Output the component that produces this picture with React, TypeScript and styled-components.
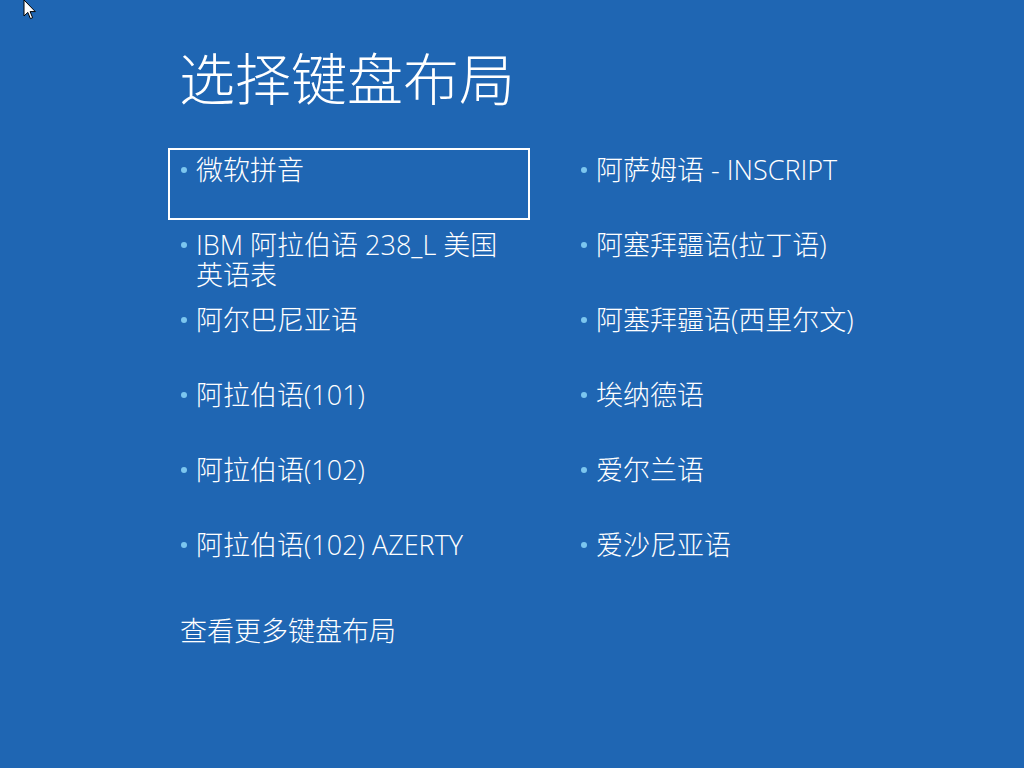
import React from "react";
import styled, { createGlobalStyle } from "styled-components";

const Global = createGlobalStyle`
  html, body {
    margin: 0;
    padding: 0;
    background: #1f66b3;
    overflow: hidden;
  }
  body {
    font-family: "Open Sans", "Noto Sans CJK SC", sans-serif;
    color: #ffffff;
  }
`;

const Page = styled.div`
  position: relative;
  width: 1024px;
  height: 768px;
  background: #1f66b3;
  box-sizing: border-box;
  padding: 42px 0 0 168px;
`;

const Title = styled.h1`
  margin: 0 0 39px 11px;
  font-family: "Noto Sans CJK SC", sans-serif;
  font-weight: 300;
  font-size: 56px;
  line-height: 67px;
  letter-spacing: 0;
`;

const Grid = styled.div`
  display: grid;
  grid-template-columns: 362px 362px;
  grid-auto-rows: 72px;
  column-gap: 38px;
  row-gap: 3px;
`;

const Item = styled.div<{ $selected?: boolean }>`
  box-sizing: border-box;
  border: 2px solid ${(p) => (p.$selected ? "#ffffff" : "transparent")};
  padding: 5px 12px 0 26px;
  position: relative;
  font-family: "Open Sans", "Noto Sans CJK SC", sans-serif;
  font-weight: 300;
  font-size: 27px;
  line-height: 30px;
  color: #ffffff;
`;

const Bullet = styled.span`
  position: absolute;
  left: 11px;
  top: 17px;
  width: 6px;
  height: 6px;
  border-radius: 50%;
  background: #7cc6ef;
`;

const More = styled.div`
  margin: 20px 0 0 12px;
  font-family: "Noto Sans CJK SC", sans-serif;
  font-weight: 300;
  font-size: 27px;
  line-height: 30px;
`;

const Cursor = styled.svg`
  position: absolute;
  left: 23px;
  top: -1px;
`;

const items: [string, boolean?][] = [
  ["微软拼音", true],
  ["阿萨姆语 - INSCRIPT"],
  ["IBM 阿拉伯语 238_L 美国英语表"],
  ["阿塞拜疆语(拉丁语)"],
  ["阿尔巴尼亚语"],
  ["阿塞拜疆语(西里尔文)"],
  ["阿拉伯语(101)"],
  ["埃纳德语"],
  ["阿拉伯语(102)"],
  ["爱尔兰语"],
  ["阿拉伯语(102) AZERTY"],
  ["爱沙尼亚语"],
];

export default function App() {
  return (
    <Page>
      <Global />
      <Title>选择键盘布局</Title>
      <Grid>
        {items.map(([label, sel], i) => (
          <Item key={i} $selected={sel}>
            <Bullet />
            {label}
          </Item>
        ))}
      </Grid>
      <More>查看更多键盘布局</More>
      <Cursor width="14" height="22" viewBox="0 0 14 22">
        <path
          d="M1 1 L1 17 L4.8 13.4 L7.4 19.6 L9.6 18.7 L7.1 12.6 L12.3 12.6 Z"
          fill="#ffffff"
          stroke="#000000"
          strokeWidth="1"
          strokeLinejoin="miter"
        />
      </Cursor>
    </Page>
  );
}
